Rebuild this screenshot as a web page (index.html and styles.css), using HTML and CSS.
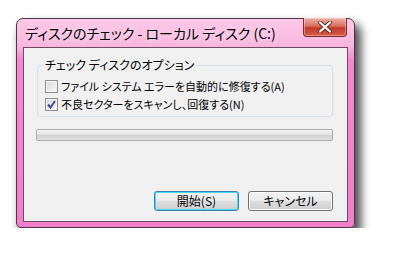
FILE: index.html
```html
<!DOCTYPE html>
<html lang="ja">
<head>
<meta charset="utf-8">
<title>ディスクのチェック</title>
<link rel="stylesheet" href="styles.css">
</head>
<body>
  <div class="window">
    <div class="titlebar">
      <span class="title">ディスクのチェック - ローカル ディスク (C:)</span>
      <div class="close">
        <svg width="14" height="12" viewBox="0 0 14 12"><path d="M2 1.5 L12 10.5 M12 1.5 L2 10.5" stroke="#6b2a24" stroke-width="4" stroke-linecap="round"/><path d="M2 1.5 L12 10.5 M12 1.5 L2 10.5" stroke="#fff" stroke-width="2.2" stroke-linecap="round"/></svg>
      </div>
    </div>
    <div class="client">
      <fieldset class="options">
        <legend>チェック ディスクのオプション</legend>
        <label class="check"><span class="box"></span>ファイル システム エラーを自動的に修復する(A)</label>
        <label class="check"><span class="box"><svg width="9" height="9" viewBox="0 0 9 9"><path d="M1 4.5 L3.5 7.5 L8 1" fill="none" stroke="#3b4f92" stroke-width="2"/></svg></span>不良セクターをスキャンし、回復する(N)</label>
      </fieldset>
      <div class="progress"></div>
      <div class="buttons">
        <button class="btn default">開始(S)</button>
        <button class="btn">キャンセル</button>
      </div>
    </div>
  </div>
</body>
</html>
```
FILE: styles.css
```css
body { margin: 0; padding: 18px 0 0 16px; background: #fff; font-family: "Noto Sans CJK JP", sans-serif; color: #000; }

.window { width: 339px; height: 210px; box-sizing: border-box; display: flex; flex-direction: column; padding: 0 6px 5px; border: 1px solid #4e3444; border-radius: 7px 7px 5px 5px; background: linear-gradient(#fcc9e8, #f9b4de 28px, #f489d0 40px, #f27fcc); box-shadow: 5px 7px 10px 1px rgba(0, 0, 0, .7); }

.titlebar { height: 28px; display: flex; justify-content: space-between; align-items: flex-start; }
.title { margin: 5px 0 0 2px; font-size: 14px; line-height: 18px; font-feature-settings: "palt"; text-shadow: 0 0 6px rgba(255, 255, 255, .9); }
.close { width: 44px; height: 19px; margin: -1px 1px 0 0; box-sizing: border-box; display: flex; align-items: center; justify-content: center; border: 1px solid #7a2f2a; border-top: 0; border-radius: 0 0 4px 4px; background: linear-gradient(#eab0a6, #d8705f 45%, #c13a2b 55%, #d85a48); box-shadow: inset 0 0 0 1px rgba(255, 255, 255, .35); }

.client { flex: 1; display: flex; flex-direction: column; padding: 0 14px 0 12px; background: #f0f0f0; border: 1px solid #6a4b60; font-size: 12px; }

.options { margin: 10px 0 0 1px; padding: 5px 0 3px 7px; border: 1px solid #d5dfe5; border-radius: 3px; }
.options legend { padding: 0 2px; margin-left: -2px; line-height: 14px; font-feature-settings: "palt"; }

.check { display: flex; align-items: center; gap: 3px; height: 18px; font-size: 11px; font-feature-settings: "palt"; }
.box { width: 13px; height: 13px; box-sizing: border-box; display: flex; align-items: center; justify-content: center; border: 1px solid #8f8f8f; background: linear-gradient(135deg, #d8d8d8, #f7f7f7); box-shadow: inset 0 0 0 1px #f4f4f4; }

.progress { height: 12px; margin-top: 12px; box-sizing: border-box; border: 1px solid #adadad; border-radius: 2px; background: linear-gradient(#f4f4f4, #e2e2e2 45%, #d2d2d2 55%, #dedede); }

.buttons { margin-top: auto; margin-bottom: 10px; display: flex; justify-content: flex-end; gap: 9px; }
.btn { width: 85px; height: 20px; padding: 0; font: inherit; font-size: 12px; line-height: 16px; font-feature-settings: "palt"; border: 1px solid #707070; border-radius: 3px; background: linear-gradient(#f2f2f2, #ebebeb 48%, #dddddd 52%, #cfcfcf); box-shadow: inset 0 0 0 1px #fcfcfc; color: #000; }
.btn.default { border-color: #3c7fb1; box-shadow: inset 0 0 0 1px #48d8fb; }
```
